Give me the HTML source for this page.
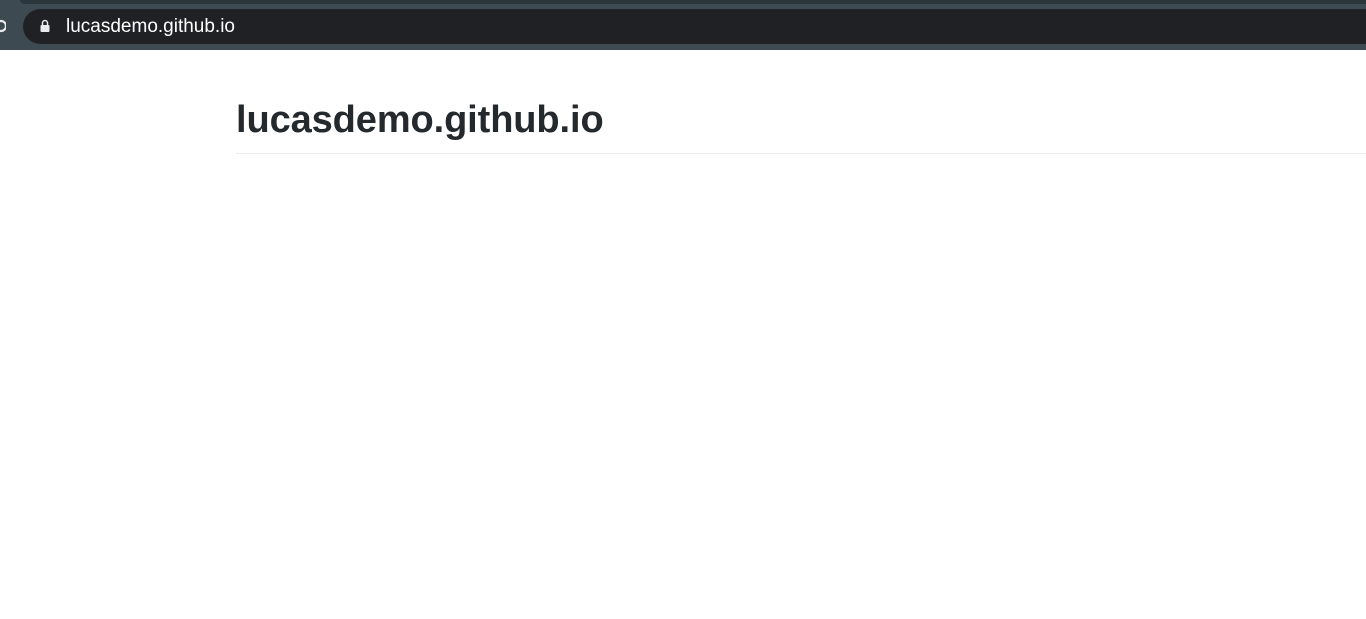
<!DOCTYPE html>
<html><head><meta charset="utf-8"><style>
html,body{margin:0;padding:0;width:1366px;height:619px;overflow:hidden;background:#fff;font-family:"Liberation Sans",sans-serif}
.top{position:absolute;left:0;top:0;width:1366px;height:50px;background:#3d4a52}
.strip{position:absolute;left:20px;top:0;width:1346px;height:4px;background:#2b363c;border-radius:0 0 0 4px}
.bar{position:absolute;left:23px;top:9px;width:1360px;height:35px;background:#202124;border-radius:18px}
.url{position:absolute;left:66px;top:16px;color:#fff;font-size:19px;line-height:21px}
.lock{position:absolute;left:40px;top:19px;width:10px;height:14px}
.reload{position:absolute;left:-4px;top:19px;width:10px;height:14px}
h1{position:absolute;left:236px;top:97px;margin:0;font-size:38px;font-weight:bold;color:#24292e;line-height:46px;letter-spacing:-0.1px}
.hr{position:absolute;left:236px;top:153px;width:1130px;height:1px;background:#eaecef}
</style></head><body>
<div class="top"><div class="strip"></div><div class="bar"></div>
<svg class="reload" viewBox="0 0 10 14"><path d="M2 3 A5 5 0 1 1 2 11" stroke="#e8eaed" stroke-width="2.2" fill="none"/></svg>
<svg class="lock" viewBox="0 0 10 14"><path d="M2.5 6V4a2.5 2.5 0 0 1 5 0v2" stroke="#e8eaed" stroke-width="1.5" fill="none"/><rect x="0.5" y="6" width="9" height="7" rx="1" fill="#e8eaed"/></svg>
<div class="url">lucasdemo.github.io</div></div>
<h1>lucasdemo.github.io</h1>
<div class="hr"></div>
</body></html>
